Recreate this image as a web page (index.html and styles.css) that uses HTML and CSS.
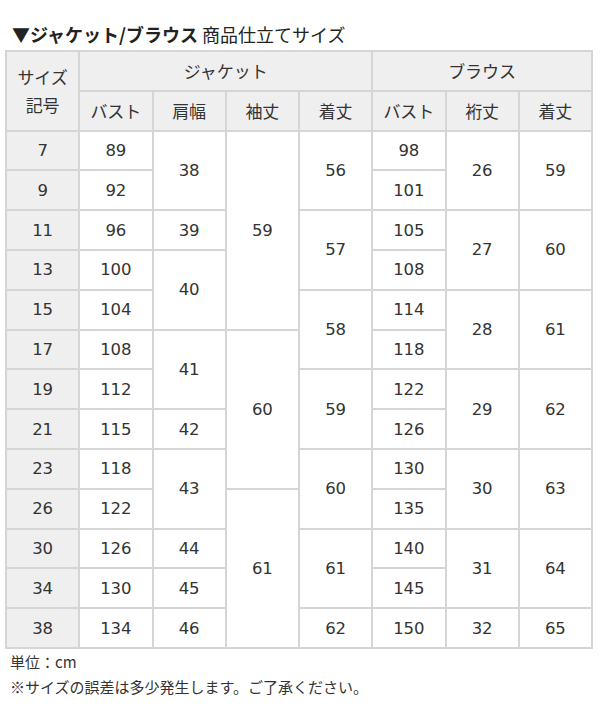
FILE: index.html
```html
<!DOCTYPE html>
<html lang="ja">
<head>
<meta charset="utf-8">
<link rel="stylesheet" href="styles.css">
</head>
<body>
<div class="page">
  <h2 class="title"><b>▼ジャケット/ブラウス</b> 商品仕立てサイズ</h2>
  <table class="size">
    <colgroup>
      <col><col><col><col><col><col><col><col>
    </colgroup>
    <thead>
      <tr class="h1">
        <th rowspan="2" class="code">サイズ<br>記号</th>
        <th colspan="4">ジャケット</th>
        <th colspan="3">ブラウス</th>
      </tr>
      <tr>
        <th>バスト</th><th>肩幅</th><th>袖丈</th><th>着丈</th>
        <th>バスト</th><th>裄丈</th><th>着丈</th>
      </tr>
    </thead>
    <tbody>
      <tr><th>7</th><td>89</td><td rowspan="2">38</td><td rowspan="5">59</td><td rowspan="2">56</td><td>98</td><td rowspan="2">26</td><td rowspan="2">59</td></tr>
      <tr><th>9</th><td>92</td><td>101</td></tr>
      <tr><th>11</th><td>96</td><td>39</td><td rowspan="2">57</td><td>105</td><td rowspan="2">27</td><td rowspan="2">60</td></tr>
      <tr><th>13</th><td>100</td><td rowspan="2">40</td><td>108</td></tr>
      <tr><th>15</th><td>104</td><td rowspan="2">58</td><td>114</td><td rowspan="2">28</td><td rowspan="2">61</td></tr>
      <tr><th>17</th><td>108</td><td rowspan="2">41</td><td rowspan="4">60</td><td>118</td></tr>
      <tr><th>19</th><td>112</td><td rowspan="2">59</td><td>122</td><td rowspan="2">29</td><td rowspan="2">62</td></tr>
      <tr><th>21</th><td>115</td><td>42</td><td>126</td></tr>
      <tr><th>23</th><td>118</td><td rowspan="2">43</td><td rowspan="2">60</td><td>130</td><td rowspan="2">30</td><td rowspan="2">63</td></tr>
      <tr><th>26</th><td>122</td><td rowspan="4">61</td><td>135</td></tr>
      <tr><th>30</th><td>126</td><td>44</td><td rowspan="2">61</td><td>140</td><td rowspan="2">31</td><td rowspan="2">64</td></tr>
      <tr><th>34</th><td>130</td><td>45</td><td>145</td></tr>
      <tr><th>38</th><td>134</td><td>46</td><td>62</td><td>150</td><td>32</td><td>65</td></tr>
    </tbody>
  </table>
  <div class="notes">
    <p>単位：cm</p>
    <p>※サイズの誤差は多少発生します。ご了承ください。</p>
  </div>
</div>
</body>
</html>
```

FILE: styles.css
```css
html, body {
  margin: 0;
  padding: 0;
  background: #ffffff;
}

body {
  font-family: "DejaVu Sans", "Noto Sans CJK JP", sans-serif;
  color: #333333;
}

.page {
  padding: 22px 0 0 5px;
}

.title {
  margin: 0 0 0 7px;
  font-size: 18px;
  line-height: 25px;
  font-weight: normal;
  color: #222222;
  font-family: "Noto Sans CJK JP", sans-serif;
}

.title b {
  font-weight: bold;
}

.size {
  margin-top: 3px;
  width: 588px;
  table-layout: fixed;
  border-collapse: collapse;
  font-size: 16.5px;
}

.size th,
.size td {
  border: 2px solid #d5d5d5;
  text-align: center;
  vertical-align: middle;
  padding: 0;
  height: 37.8px;
  font-weight: normal;
  color: #333333;
}

.size thead th {
  background: #efefef;
  font-family: "Noto Sans CJK JP", sans-serif;
  font-size: 17px;
}

.size tbody th {
  background: #efefef;
}

.size td {
  background: #ffffff;
}

.size .code {
  line-height: 28px;
}

.notes {
  padding-left: 5px;
  font-family: "Noto Sans CJK JP", sans-serif;
  font-size: 15px;
  color: #333333;
}

.notes p {
  margin: 0;
  line-height: 25px;
}
```
